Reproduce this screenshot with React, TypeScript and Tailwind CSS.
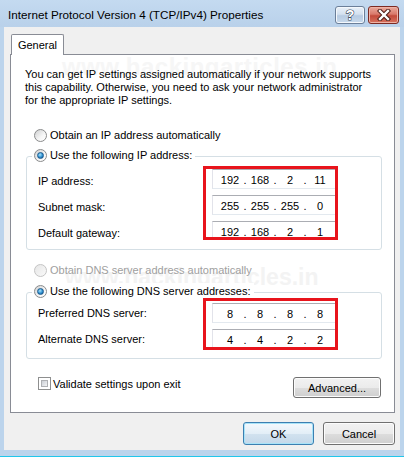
import React from 'react'

function Radio({ checked, disabled }: { checked?: boolean; disabled?: boolean }) {
  return (
    <span
      className={`flex h-[13px] w-[13px] shrink-0 items-center justify-center rounded-full border ${
        disabled
          ? 'border-[#c4c4c4] bg-[linear-gradient(135deg,#e6e6e6,#fafafa)]'
          : 'border-[#8a8b8c] bg-[linear-gradient(135deg,#cfd0d1,#f6f6f6_60%,#ffffff)]'
      }`}
    >
      {checked && (
        <span className="h-[7px] w-[7px] rounded-full border border-[#1c5b8e] bg-[radial-gradient(circle_at_40%_35%,#a9e4fb,#2f8fd0_55%,#0f4c82)]" />
      )}
    </span>
  )
}

function IpField({ value }: { value: string[] }) {
  return (
    <div className="flex h-[20px] w-[132px] shrink-0 items-center border border-[#abadb3] border-b-[#e3e9ef] border-l-[#e2e3ea] border-r-[#dbdfe6] bg-white pl-[6px] pt-[2px] text-black">
      {value.map((v, i) => (
        <React.Fragment key={i}>
          {i > 0 && <span className="w-[8px] text-center">.</span>}
          <span className="w-[22px] text-center">{v}</span>
        </React.Fragment>
      ))}
    </div>
  )
}

function Button({ children, primary }: { children: React.ReactNode; primary?: boolean }) {
  return (
    <button
      className={`flex items-center justify-center rounded-[3px] border text-black ${
        primary
          ? 'border-[#3c7fb1] bg-[linear-gradient(#f4f9fd,#e3eef7_50%,#d2e2ef_51%,#c4d8ea)] shadow-[inset_0_0_0_1px_#a8e3f8]'
          : 'border-[#707070] bg-[linear-gradient(#f2f2f2,#ebebeb_50%,#dddddd_51%,#cfcfcf)] shadow-[inset_0_0_0_1px_#fcfcfc]'
      }`}
    >
      {children}
    </button>
  )
}

function AddressGroup({
  legend,
  rows,
  boxHeight,
  boxTop,
  boxPad,
}: {
  legend: string
  rows: { label: string; value: string[] }[]
  boxHeight: string
  boxTop: string
  boxPad: string
}) {
  return (
    <div className="ml-[15px] w-[356px] rounded-[3px] border border-[#d5dfe5] pb-[8px]">
      <div className="-mt-[10px] ml-[5px] flex h-[16px] w-fit items-center gap-[3px] bg-white pl-[2px] pr-[3px]">
        <Radio checked />
        <span>{legend}</span>
      </div>
      <div className={`flex ${boxTop}`}>
        <div className={`ml-[11px] flex w-[165px] flex-col gap-[6px] pt-[3px] ${boxPad}`}>
          {rows.map((r) => (
            <div key={r.label} className="flex h-[20px] items-center pt-[3px]">
              {r.label}
            </div>
          ))}
        </div>
        <div className={`flex w-[135px] flex-col gap-[6px] overflow-hidden border-[3px] border-[#e8141c] pl-[6px] ${boxHeight} ${boxPad}`}>
          {rows.map((r) => (
            <IpField key={r.label} value={r.value} />
          ))}
        </div>
      </div>
    </div>
  )
}

export default function App() {
  return (
    <div className="flex h-[457px] w-[404px] flex-col overflow-hidden bg-[#bcd4ec] font-['Segoe_UI','Liberation_Sans',Arial,sans-serif] text-[11px] leading-[16px] text-black">
      {/* title bar */}
      <div className="flex h-[27px] shrink-0 items-start bg-[linear-gradient(#c4daf0,#b9d1ea)] pl-[8px] pr-[5px]">
        <span className="mt-[7px] text-[11.7px] text-black">Internet Protocol Version 4 (TCP/IPv4) Properties</span>
        <div className="ml-auto mt-[6px] flex gap-[3px]">
          <div className="flex h-[18px] w-[30px] items-center justify-center rounded-[3px] border border-[#6b7f99] bg-[linear-gradient(#eaf1f9,#d4e1ef_45%,#b7cbe2_55%,#c9daec)] shadow-[inset_0_0_0_1px_#f4f8fc]">
            <svg width="14" height="14" viewBox="0 0 14 14">
              <text x="7" y="12" textAnchor="middle" fontSize="14" fontWeight="bold" fontFamily="Liberation Sans, Arial, sans-serif" fill="#ffffff" stroke="#3c4a5c" strokeWidth="1.2" paintOrder="stroke">?</text>
            </svg>
          </div>
          <div className="flex h-[18px] w-[31px] items-center justify-center rounded-[3px] border border-[#7d2a22] bg-[linear-gradient(#eaaa9c,#d9796b_45%,#c34a3b_55%,#d7735f)] shadow-[inset_0_0_0_1px_#eeb3a6]">
            <svg width="14" height="12" viewBox="0 0 14 12">
              <path d="M3 2 L11 10 M11 2 L3 10" stroke="#4a1a14" strokeWidth="4.4" strokeLinecap="square" />
              <path d="M3 2 L11 10 M11 2 L3 10" stroke="#ffffff" strokeWidth="2.4" strokeLinecap="square" />
            </svg>
          </div>
        </div>
      </div>

      {/* body */}
      <div className="mx-[4px] flex h-[423px] shrink-0 flex-col bg-[#f0f0f0] pt-[7px]">
        <div className="relative z-10 -mb-[1px] ml-[7px] flex h-[21px] w-[53px] items-start justify-center rounded-t-[2px] border border-b-0 border-[#898c95] bg-white pt-[2px]">
          General
        </div>
        <div className="relative ml-[6px] flex h-[359px] w-[385px] flex-col border border-[#898c95] bg-white">
          <span className="pointer-events-none absolute left-[51px] top-[0px] text-[24px] font-bold leading-[24px] tracking-[0.5px] text-[#f6f6f6]">
            www.hackingarticles.in
          </span>
          <span className="pointer-events-none absolute left-[54px] top-[210px] text-[23px] font-bold leading-[24px] text-[#f3f3f3]">
            www.hackingarticles.in
          </span>

          <p className="relative ml-[14px] mt-[13px] leading-[13px]">
            You can get IP settings assigned automatically if your network supports
            <br />
            this capability. Otherwise, you need to ask your network administrator
            <br />
            for the appropriate IP settings.
          </p>

          <div className="relative ml-[23px] mt-[20px] flex h-[16px] items-center gap-[3px]">
            <Radio />
            <span>Obtain an IP address automatically</span>
          </div>

          <div className="relative mt-[13px]">
            <AddressGroup
              legend="Use the following IP address:"
              boxTop="mt-[3px]"
              boxPad="pt-0"
              boxHeight="h-[74px]"
              rows={[
                { label: 'IP address:', value: ['192', '168', '2', '11'] },
                { label: 'Subnet mask:', value: ['255', '255', '255', '0'] },
                { label: 'Default gateway:', value: ['192', '168', '2', '1'] },
              ]}
            />
          </div>

          <div className="relative ml-[23px] mt-[12px] flex h-[16px] items-center gap-[3px] text-[#a0a0a0]">
            <Radio disabled />
            <span>Obtain DNS server address automatically</span>
          </div>

          <div className="relative mt-[14px]">
            <AddressGroup
              legend="Use the following DNS server addresses:"
              boxTop="-mt-[1px]"
              boxPad="pt-[2px]"
              boxHeight="h-[52px]"
              rows={[
                { label: 'Preferred DNS server:', value: ['8', '8', '8', '8'] },
                { label: 'Alternate DNS server:', value: ['4', '4', '2', '2'] },
              ]}
            />
          </div>

          <div className="relative mt-[18px] flex items-start justify-between">
            <div className="ml-[27px] flex h-[13px] items-center gap-[2px]">
              <span className="h-[13px] w-[13px] shrink-0 border border-[#8e8f8f] bg-white p-[2px]">
                <span className="block h-full w-full border border-[#aeb0b3] bg-[linear-gradient(135deg,#cbcfd5,#f2f3f5)]" />
              </span>
              <span className="mt-[1px]">Validate settings upon exit</span>
            </div>
            <div className="mr-[13px] h-[21px] w-[88px]">
              <Button>
                <span className="flex h-[19px] w-[86px] items-center justify-center">Advanced...</span>
              </Button>
            </div>
          </div>
        </div>

        <div className="mt-[9px] flex justify-end gap-[9px] pr-[5px]">
          <Button primary>
            <span className="flex h-[21px] w-[69px] items-center justify-center">OK</span>
          </Button>
          <Button>
            <span className="flex h-[21px] w-[70px] items-center justify-center">Cancel</span>
          </Button>
        </div>
      </div>

      <div className="h-[6px] shrink-0" />
      <div className="h-[1px] shrink-0 bg-[#22c6ea]" />
    </div>
  )
}
